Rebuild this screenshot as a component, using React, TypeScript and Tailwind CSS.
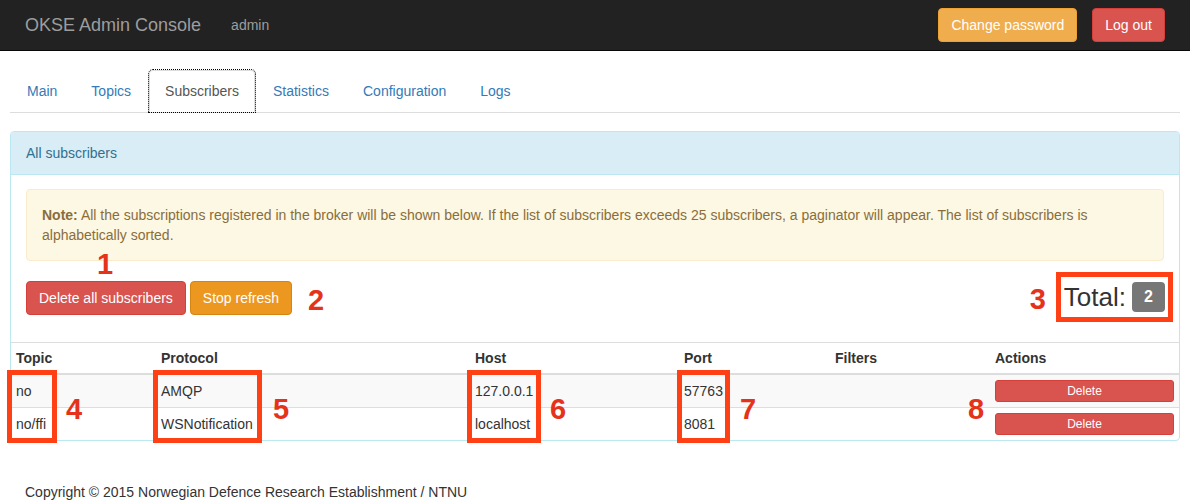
import React from "react";

type Row = {
  topic: string;
  protocol: string;
  host: string;
  port: string;
  filters: string;
};

const rows: Row[] = [
  { topic: "no", protocol: "AMQP", host: "127.0.0.1", port: "57763", filters: "" },
  { topic: "no/ffi", protocol: "WSNotification", host: "localhost", port: "8081", filters: "" },
];

const tabs = ["Main", "Topics", "Subscribers", "Statistics", "Configuration", "Logs"];

const markCls = "text-[29px] leading-none font-bold text-[#e5321b]";

// red annotation marks drawn over the screenshot
const Mark = ({ n, className }: { n: string; className: string }) => (
  <span className={`absolute ${markCls} ${className}`}>{n}</span>
);

const Box = ({ className }: { className: string }) => (
  <div className={`absolute border-[5px] border-[#ff3f14] ${className}`} />
);

export default function App() {
  return (
    <div className="relative w-[1190px] h-[503px] overflow-hidden bg-white font-['Liberation_Sans',Arial,sans-serif] text-[14px] leading-[20px] text-[#333]">
      {/* navbar */}
      <div className="h-[51px] bg-[#222] border-b border-[#080808] flex items-center px-[25px]">
        <span className="text-[18px] text-[#9d9d9d]">OKSE Admin Console</span>
        <span className="ml-[30px] text-[#9d9d9d]">admin</span>
        <div className="ml-auto flex gap-[15px]">
          <button className="h-[34px] px-[12px] rounded-[4px] bg-[#f0ad4e] border border-[#eea236] text-white">
            Change password
          </button>
          <button className="h-[34px] px-[12px] rounded-[4px] bg-[#d9534f] border border-[#d43f3a] text-white">
            Log out
          </button>
        </div>
      </div>

      <div className="px-[10px]">
        {/* tabs */}
        <ul className="mt-[19px] flex border-b border-[#ddd] pl-[1px]">
          {tabs.map((t) =>
            t === "Subscribers" ? (
              <li key={t} className="mr-[2px] -mb-px">
                <span className="block px-[15px] py-[10px] bg-white border border-[#ddd] border-b-transparent rounded-t-[4px] text-[#555] outline-1 outline-dotted outline-black">
                  {t}
                </span>
              </li>
            ) : (
              <li key={t} className="mr-[2px]">
                <span className="block px-[15px] py-[10px] border border-transparent text-[#337ab7]">{t}</span>
              </li>
            )
          )}
        </ul>

        {/* panel */}
        <div className="mt-[18px] border border-[#bce8f1] rounded-[4px]">
          <div className="h-[43px] flex items-center px-[15px] bg-[#d9edf7] border-b border-[#bce8f1] text-[#31708f] rounded-t-[3px]">
            All subscribers
          </div>
          <div className="px-[15px] pt-[14px]">
            <div className="bg-[#fcf8e3] border border-[#faebcc] rounded-[4px] text-[#8a6d3b] p-[15px]">
              <b>Note:</b> All the subscriptions registered in the broker will be shown below. If the list of
              subscribers exceeds 25 subscribers, a paginator will appear. The list of subscribers is alphabetically
              sorted.
            </div>
            <div className="mt-[20px] h-[61px] flex items-start">
              <button className="h-[34px] px-[12px] rounded-[4px] bg-[#d9534f] border border-[#d43f3a] text-white">
                Delete all subscribers
              </button>
              <button className="ml-[4px] h-[34px] px-[12px] rounded-[4px] bg-[#ec971f] border border-[#d58512] text-white">
                Stop refresh
              </button>
              <span className={`ml-[16px] mt-[5px] ${markCls}`}>2</span>
              <div className="ml-auto -mt-[9px] -mr-[9px] flex items-center">
                <span className={`mt-[4px] mr-[10px] ${markCls}`}>3</span>
                <div className="h-[50px] border-[5px] border-[#ff3f14] flex items-center pl-[3px] pr-[3px] gap-[6px]">
                  <span className="text-[26px] leading-[30px] text-[#333]">Total:</span>
                  <span className="h-[30px] w-[33px] rounded-[4px] bg-[#777] text-white font-bold text-[16px] flex items-center justify-center">
                    2
                  </span>
                </div>
              </div>
            </div>
          </div>

          {/* table */}
          <table className="w-full border-collapse table-fixed">
            <colgroup>
              <col className="w-[145px]" />
              <col className="w-[314px]" />
              <col className="w-[209px]" />
              <col className="w-[151px]" />
              <col className="w-[160px]" />
              <col />
            </colgroup>
            <thead>
              <tr className="border-t border-[#ddd]">
                {["Topic", "Protocol", "Host", "Port", "Filters", "Actions"].map((h) => (
                  <th key={h} className="text-left font-bold p-[5px] border-b-2 border-[#ddd]">
                    {h}
                  </th>
                ))}
              </tr>
            </thead>
            <tbody>
              {rows.map((r, i) => (
                <tr key={r.topic} className={i === 0 ? "bg-[#f9f9f9]" : "border-t border-[#ddd]"}>
                  <td className="px-[5px] h-[33px]">{r.topic}</td>
                  <td className="px-[5px]">{r.protocol}</td>
                  <td className="px-[5px]">{r.host}</td>
                  <td className="px-[5px]">{r.port}</td>
                  <td className="px-[5px]">{r.filters}</td>
                  <td className="px-[5px]">
                    <button className="w-full h-[22px] rounded-[3px] bg-[#d9534f] border border-[#d43f3a] text-white text-[12px] leading-[18px]">
                      Delete
                    </button>
                  </td>
                </tr>
              ))}
            </tbody>
          </table>
        </div>
      </div>

      <div className="mt-[41px] pl-[25px] text-[#333]">
        Copyright © 2015 Norwegian Defence Research Establishment / NTNU
      </div>

      {/* annotations over the table */}
      <Mark n="1" className="left-[97px] top-[250px]" />
      <Box className="left-[7px] top-[370px] w-[50px] h-[73px]" />
      <Mark n="4" className="left-[66px] top-[395px]" />
      <Box className="left-[153px] top-[370px] w-[109px] h-[73px]" />
      <Mark n="5" className="left-[273px] top-[395px]" />
      <Box className="left-[467px] top-[370px] w-[74px] h-[73px]" />
      <Mark n="6" className="left-[550px] top-[395px]" />
      <Box className="left-[677px] top-[370px] w-[53px] h-[73px]" />
      <Mark n="7" className="left-[740px] top-[395px]" />
      <Mark n="8" className="left-[968px] top-[395px]" />
    </div>
  );
}
